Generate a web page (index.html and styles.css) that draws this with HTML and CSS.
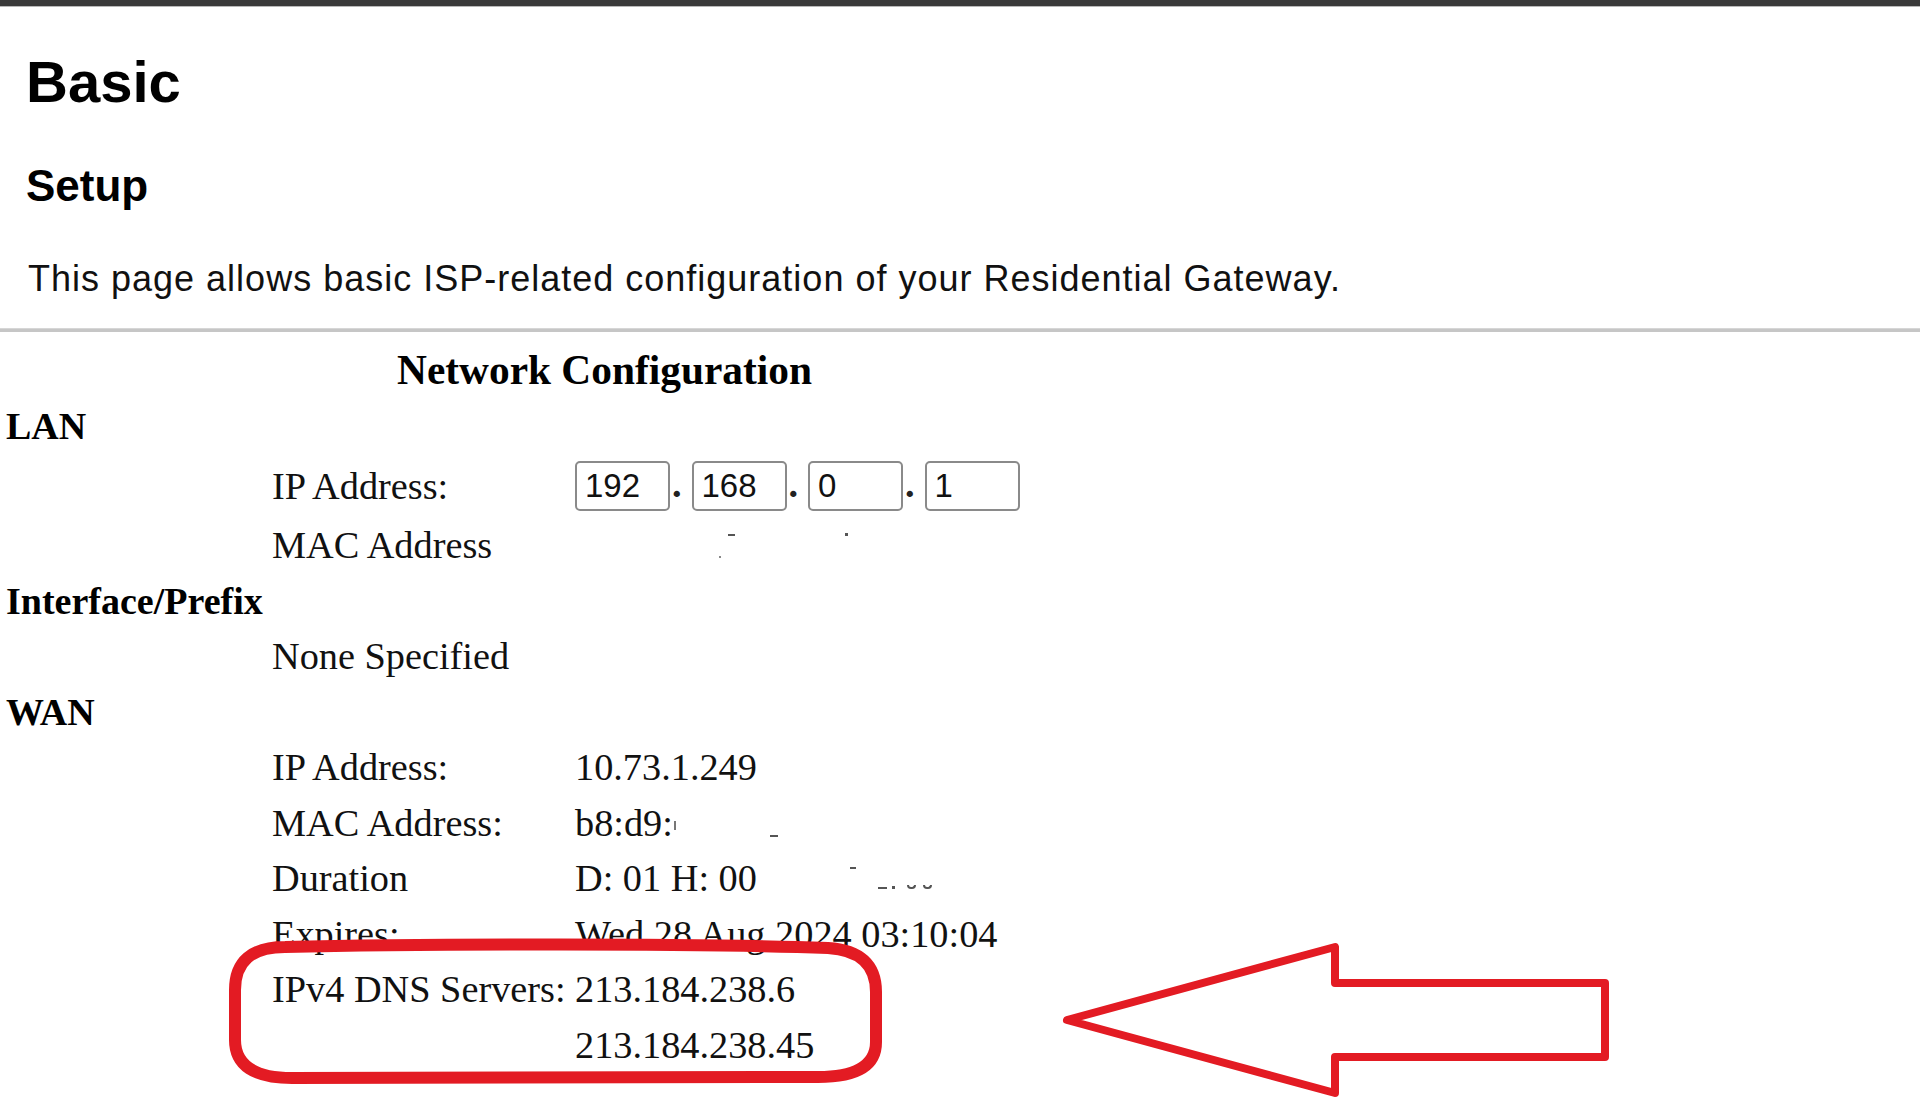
FILE: index.html
```html
<!DOCTYPE html>
<html lang="en">
<head>
<meta charset="utf-8">
<title>Basic Setup</title>
<link rel="stylesheet" href="styles.css">
</head>
<body>
<div class="topbar"></div>
<div class="header">
  <h1>Basic</h1>
  <h2>Setup</h2>
  <p class="desc">This page allows basic ISP-related configuration of your Residential Gateway.</p>
</div>
<div class="rule"></div>
<div class="config">
  <div class="title">Network Configuration</div>
  <div class="section">LAN</div>
  <div class="row row-ip">
    <span class="label">IP Address:</span>
    <div class="ipgroup">
      <input type="text" value="192"><span class="dot">.</span><input type="text" value="168"><span class="dot">.</span><input type="text" value="0"><span class="dot">.</span><input type="text" value="1">
    </div>
  </div>
  <div class="row">
    <span class="label">MAC Address</span>
    <span class="value"><span class="speck lan1"></span><span class="speck lan2"></span><span class="speck lan3"></span></span>
  </div>
  <div class="section">Interface/Prefix</div>
  <div class="row"><span class="label">None Specified</span></div>
  <div class="section">WAN</div>
  <div class="row"><span class="label">IP Address:</span><span class="value">10.73.1.249</span></div>
  <div class="row"><span class="label">MAC Address:</span><span class="value">b8:d9:<span class="speck mac1"></span><span class="speck mac2"></span></span></div>
  <div class="row"><span class="label">Duration</span><span class="value">D: 01 H: 00<span class="speck dur1"></span><span class="speck dur2"></span><span class="speck dur3"></span><span class="speck dur4"></span><span class="speck dur5"></span></span></div>
  <div class="row"><span class="label">Expires:</span><span class="value">Wed 28 Aug 2024 03:10:04</span></div>
  <div class="row"><span class="label">IPv4 DNS Servers:</span><span class="value">213.184.238.6</span></div>
  <div class="row"><span class="label"></span><span class="value">213.184.238.45</span></div>
</div>
<svg class="annot" viewBox="0 0 1920 1102" width="1920" height="1102" aria-hidden="true">
  <path class="ring" d="M 285 947 C 420 944, 700 943, 828 948 Q 876 951 876 992 L 876 1042 Q 876 1077 818 1077 L 292 1078 Q 235 1078 235 1040 L 235 990 Q 235 947 285 947 Z"/>
  <polygon class="arrow" points="1067,1020 1335,947 1335,983 1605,983 1605,1057 1335,1057 1335,1093"/>
</svg>
</body>
</html>
```
FILE: styles.css
```css
* {
  box-sizing: border-box;
}

html, body {
  margin: 0;
  padding: 0;
}

body {
  position: relative;
  width: 1920px;
  height: 1102px;
  overflow: hidden;
  background: #ffffff;
  color: #000000;
}

.topbar {
  height: 7px;
  background: #3a3a3a;
  border-bottom: 1px solid #b8b8b8;
}

.header {
  padding: 0 0 0 26px;
  font-family: "Liberation Sans", Arial, sans-serif;
  display: flow-root;
}

.header h1 {
  margin: 45px 0 0 0;
  font-size: 58px;
  line-height: 60px;
  font-weight: bold;
}

.header h2 {
  margin: 49px 0 0 0;
  font-size: 44px;
  line-height: 50px;
  font-weight: bold;
}

.desc {
  margin: 48px 0 0 2px;
  font-size: 36px;
  line-height: 40px;
  letter-spacing: 1px;
  color: #111;
}

.rule {
  margin-top: 28.5px;
  height: 4px;
  background: #c6c6c6;
  border-top: 1px solid #d6d6d6;
}

.config {
  font-family: "Liberation Serif", "Times New Roman", serif;
  font-size: 38.3px;
  color: #111;
  display: flow-root;
}

.title {
  margin: 12px 0 2px 0;
  padding-left: 397px;
  font-size: 41.4px;
  line-height: 53px;
  font-weight: bold;
  color: #000;
}

.section {
  padding-left: 6px;
  font-size: 38px;
  line-height: 55.5px;
  font-weight: bold;
  color: #000;
}

.row {
  display: flex;
  align-items: baseline;
  padding-left: 272px;
  line-height: 55.5px;
  height: 55.5px;
  white-space: nowrap;
}

.row-ip {
  align-items: center;
  height: 64px;
  line-height: 64px;
}

.label {
  flex: 0 0 303px;
}

.value {
  display: inline-block;
}

.ipgroup {
  display: flex;
  align-items: baseline;
  line-height: normal;
}

.ipgroup input {
  width: 95px;
  height: 50px;
  margin: 0;
  padding: 0 0 0 8px;
  border: 2px solid #8a8a8a;
  border-radius: 5px;
  background: #fff;
  color: #111;
  font-family: "Liberation Sans", Arial, sans-serif;
  font-size: 33px;
  outline: none;
}

.dot {
  width: 21.5px;
  padding-left: 2px;
  font-weight: bold;
  color: #222;
}

.speck {
  display: inline-block;
  background: #555;
}

.lan1 { width: 2px; height: 2px; margin-left: 144px; vertical-align: 0; background: #888; }
.lan2 { width: 7px; height: 2px; margin-left: 7px; vertical-align: 22px; }
.lan3 { width: 3px; height: 3px; margin-left: 110px; vertical-align: 22px; }

.mac1 { width: 2px; height: 9px; margin-left: 1px; vertical-align: 6px; background: #777; }
.mac2 { width: 8px; height: 2px; margin-left: 94px; vertical-align: -1px; }

.dur1 { width: 6px; height: 2px; margin-left: 93px; vertical-align: 22px; }
.dur2 { width: 9px; height: 2px; margin-left: 22px; vertical-align: 2px; }
.dur3 { width: 3px; height: 3px; margin-left: 5px; vertical-align: 2px; }
.dur4 { width: 9px; height: 4px; margin-left: 12px; vertical-align: 2px; border-radius: 0 0 5px 5px; background: transparent; border: 2px solid #555; border-top: none; }
.dur5 { width: 9px; height: 4px; margin-left: 7px; vertical-align: 2px; border-radius: 0 0 5px 5px; background: transparent; border: 2px solid #555; border-top: none; }

.annot {
  position: absolute;
  top: 0;
  left: 0;
  pointer-events: none;
}

.ring {
  fill: none;
  stroke: #e31b23;
  stroke-width: 12;
  stroke-linejoin: round;
}

.arrow {
  fill: none;
  stroke: #e31b23;
  stroke-width: 8;
  stroke-linejoin: round;
}
```
